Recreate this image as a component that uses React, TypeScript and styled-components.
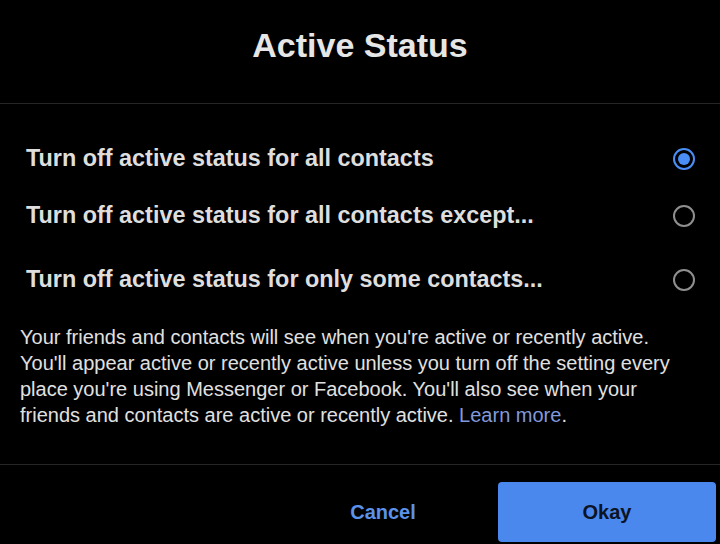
import React, { useState } from 'react'
import styled, { createGlobalStyle } from 'styled-components'

const GlobalStyle = createGlobalStyle`
  html, body {
    margin: 0;
    padding: 0;
    background: #000;
  }
  * {
    box-sizing: border-box;
  }
`

const Dialog = styled.div`
  width: 720px;
  height: 544px;
  background: #000;
  font-family: 'Liberation Sans', Arial, Helvetica, sans-serif;
  display: flex;
  flex-direction: column;
  overflow: hidden;
`

const Header = styled.div`
  height: 104px;
  padding-top: 25px;
  border-bottom: 1px solid #262626;
  text-align: center;
`

const Title = styled.h1`
  margin: 0;
  font-size: 34px;
  line-height: 40px;
  font-weight: 700;
  color: #e6e6e6;
`

const OptionList = styled.div`
  display: flex;
  flex-direction: column;
  padding-top: 40px;
`

const OptionRow = styled.label<{ spaceBelow: number }>`
  display: flex;
  align-items: center;
  justify-content: space-between;
  padding: 0 25px 0 26px;
  height: 28px;
  margin-bottom: ${({ spaceBelow }) => spaceBelow}px;
  cursor: pointer;
`

const OptionText = styled.span`
  font-size: 23.4px;
  line-height: 28px;
  font-weight: 700;
  color: #dedede;
`

const Radio = styled.span<{ checked: boolean }>`
  width: 22px;
  height: 22px;
  margin-top: 2px;
  border-radius: 50%;
  border: 2px solid ${({ checked }) => (checked ? '#4a8ef5' : '#8f8f8f')};
  display: flex;
  align-items: center;
  justify-content: center;

  &::after {
    content: '';
    width: 12px;
    height: 12px;
    border-radius: 50%;
    background: ${({ checked }) => (checked ? '#4a8ef5' : 'transparent')};
  }
`

const Description = styled.p`
  margin: 0;
  padding: 3px 20px 36px;
  font-size: 20px;
  line-height: 26px;
  color: #e0e0e0;
  border-bottom: 1px solid #262626;
`

const LearnMore = styled.a`
  color: #8199dc;
  text-decoration: none;
`

const Footer = styled.div`
  display: flex;
  justify-content: flex-end;
  gap: 6px;
  padding: 17px 4px 0;
`

const Button = styled.button<{ primary?: boolean }>`
  width: 218px;
  height: 60px;
  border: none;
  border-radius: 4px;
  font-family: inherit;
  font-size: 20px;
  font-weight: 700;
  cursor: pointer;
  background: ${({ primary }) => (primary ? '#4a88ee' : 'transparent')};
  color: ${({ primary }) => (primary ? '#0c1424' : '#5b92ea')};
`

const options = [
  { id: 'all', label: 'Turn off active status for all contacts', spaceBelow: 29 },
  { id: 'except', label: 'Turn off active status for all contacts except...', spaceBelow: 36 },
  { id: 'some', label: 'Turn off active status for only some contacts...', spaceBelow: 28 },
]

export default function App() {
  const [selected, setSelected] = useState('all')

  return (
    <>
      <GlobalStyle />
      <Dialog>
        <Header>
          <Title>Active Status</Title>
        </Header>
        <OptionList>
          {options.map((opt) => (
            <OptionRow key={opt.id} spaceBelow={opt.spaceBelow} onClick={() => setSelected(opt.id)}>
              <OptionText>{opt.label}</OptionText>
              <Radio checked={selected === opt.id} />
            </OptionRow>
          ))}
        </OptionList>
        <Description>
          Your friends and contacts will see when you're active or recently active. You'll appear
          active or recently active unless you turn off the setting every place you're using
          Messenger or Facebook. You'll also see when your friends and contacts are active or
          recently active. <LearnMore href="#">Learn more</LearnMore>.
        </Description>
        <Footer>
          <Button>Cancel</Button>
          <Button primary>Okay</Button>
        </Footer>
      </Dialog>
    </>
  )
}
